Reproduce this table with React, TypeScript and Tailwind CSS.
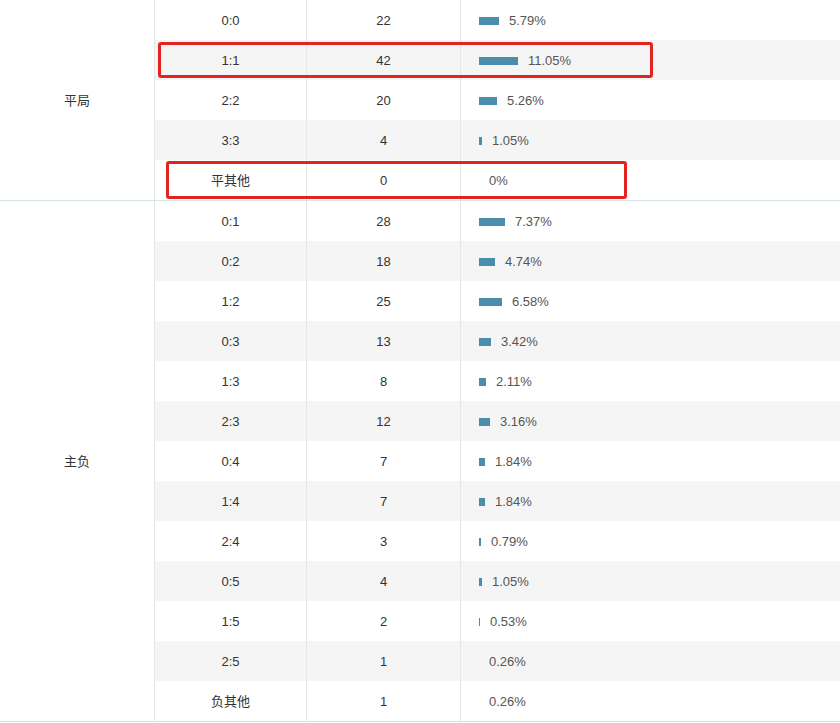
type Row = { score: string; count: number; pct: number }

const draws: Row[] = [
  { score: '0:0', count: 22, pct: 5.79 },
  { score: '1:1', count: 42, pct: 11.05 },
  { score: '2:2', count: 20, pct: 5.26 },
  { score: '3:3', count: 4, pct: 1.05 },
  { score: '平其他', count: 0, pct: 0 },
]

const losses: Row[] = [
  { score: '0:1', count: 28, pct: 7.37 },
  { score: '0:2', count: 18, pct: 4.74 },
  { score: '1:2', count: 25, pct: 6.58 },
  { score: '0:3', count: 13, pct: 3.42 },
  { score: '1:3', count: 8, pct: 2.11 },
  { score: '2:3', count: 12, pct: 3.16 },
  { score: '0:4', count: 7, pct: 1.84 },
  { score: '1:4', count: 7, pct: 1.84 },
  { score: '2:4', count: 3, pct: 0.79 },
  { score: '0:5', count: 4, pct: 1.05 },
  { score: '1:5', count: 2, pct: 0.53 },
  { score: '2:5', count: 1, pct: 0.26 },
  { score: '负其他', count: 1, pct: 0.26 },
]

function fmt(p: number) {
  return p === 0 ? '0%' : `${p.toFixed(2)}%`
}

function ScoreRow({ row, striped }: { row: Row; striped: boolean }) {
  const w = Math.floor(row.pct * 3.55)
  return (
    <div className={`flex h-10 items-center ${striped ? 'bg-[#f5f5f5]' : 'bg-white'}`}>
      <div className="flex h-full w-[152px] items-center justify-center border-r border-[#e6e6e6] pt-[2px] text-[#333]">
        {row.score}
      </div>
      <div className="flex h-full w-[154px] items-center justify-center border-r border-[#e6e6e6] pt-[2px] text-[#333]">
        {row.count}
      </div>
      <div className="flex h-full flex-1 items-center pl-[18px] pt-[2px] text-[#555]">
        <span className="mr-[10px] inline-block h-2 bg-[#4a8dac]" style={{ width: w }} />
        <span>{fmt(row.pct)}</span>
      </div>
    </div>
  )
}

function Group({ label, rows }: { label: string; rows: Row[] }) {
  return (
    <div className="flex border-b border-[#d7e3ea]">
      <div className="flex w-[155px] shrink-0 items-center justify-center border-r border-[#e6e6e6] pt-[2px] text-[#333]">
        {label}
      </div>
      <div className="flex flex-1 flex-col">
        {rows.map((r, i) => (
          <ScoreRow key={r.score} row={r} striped={i % 2 === 1} />
        ))}
      </div>
    </div>
  )
}

export default function App() {
  return (
    <div
      className="relative h-[723px] w-[840px] overflow-hidden bg-white text-[13px]"
      style={{ fontFamily: '"Liberation Sans", "Noto Sans CJK SC", sans-serif' }}
    >
      <Group label="平局" rows={draws} />
      <Group label="主负" rows={losses} />

      {/* highlight boxes */}
      <div className="absolute left-[158px] top-[42px] h-[36px] w-[495px] rounded-[3px] border-[3px] border-[#e3231e]" />
      <div className="absolute left-[166px] top-[161px] h-[38px] w-[461px] rounded-[3px] border-[3px] border-[#e3231e]" />
    </div>
  )
}
